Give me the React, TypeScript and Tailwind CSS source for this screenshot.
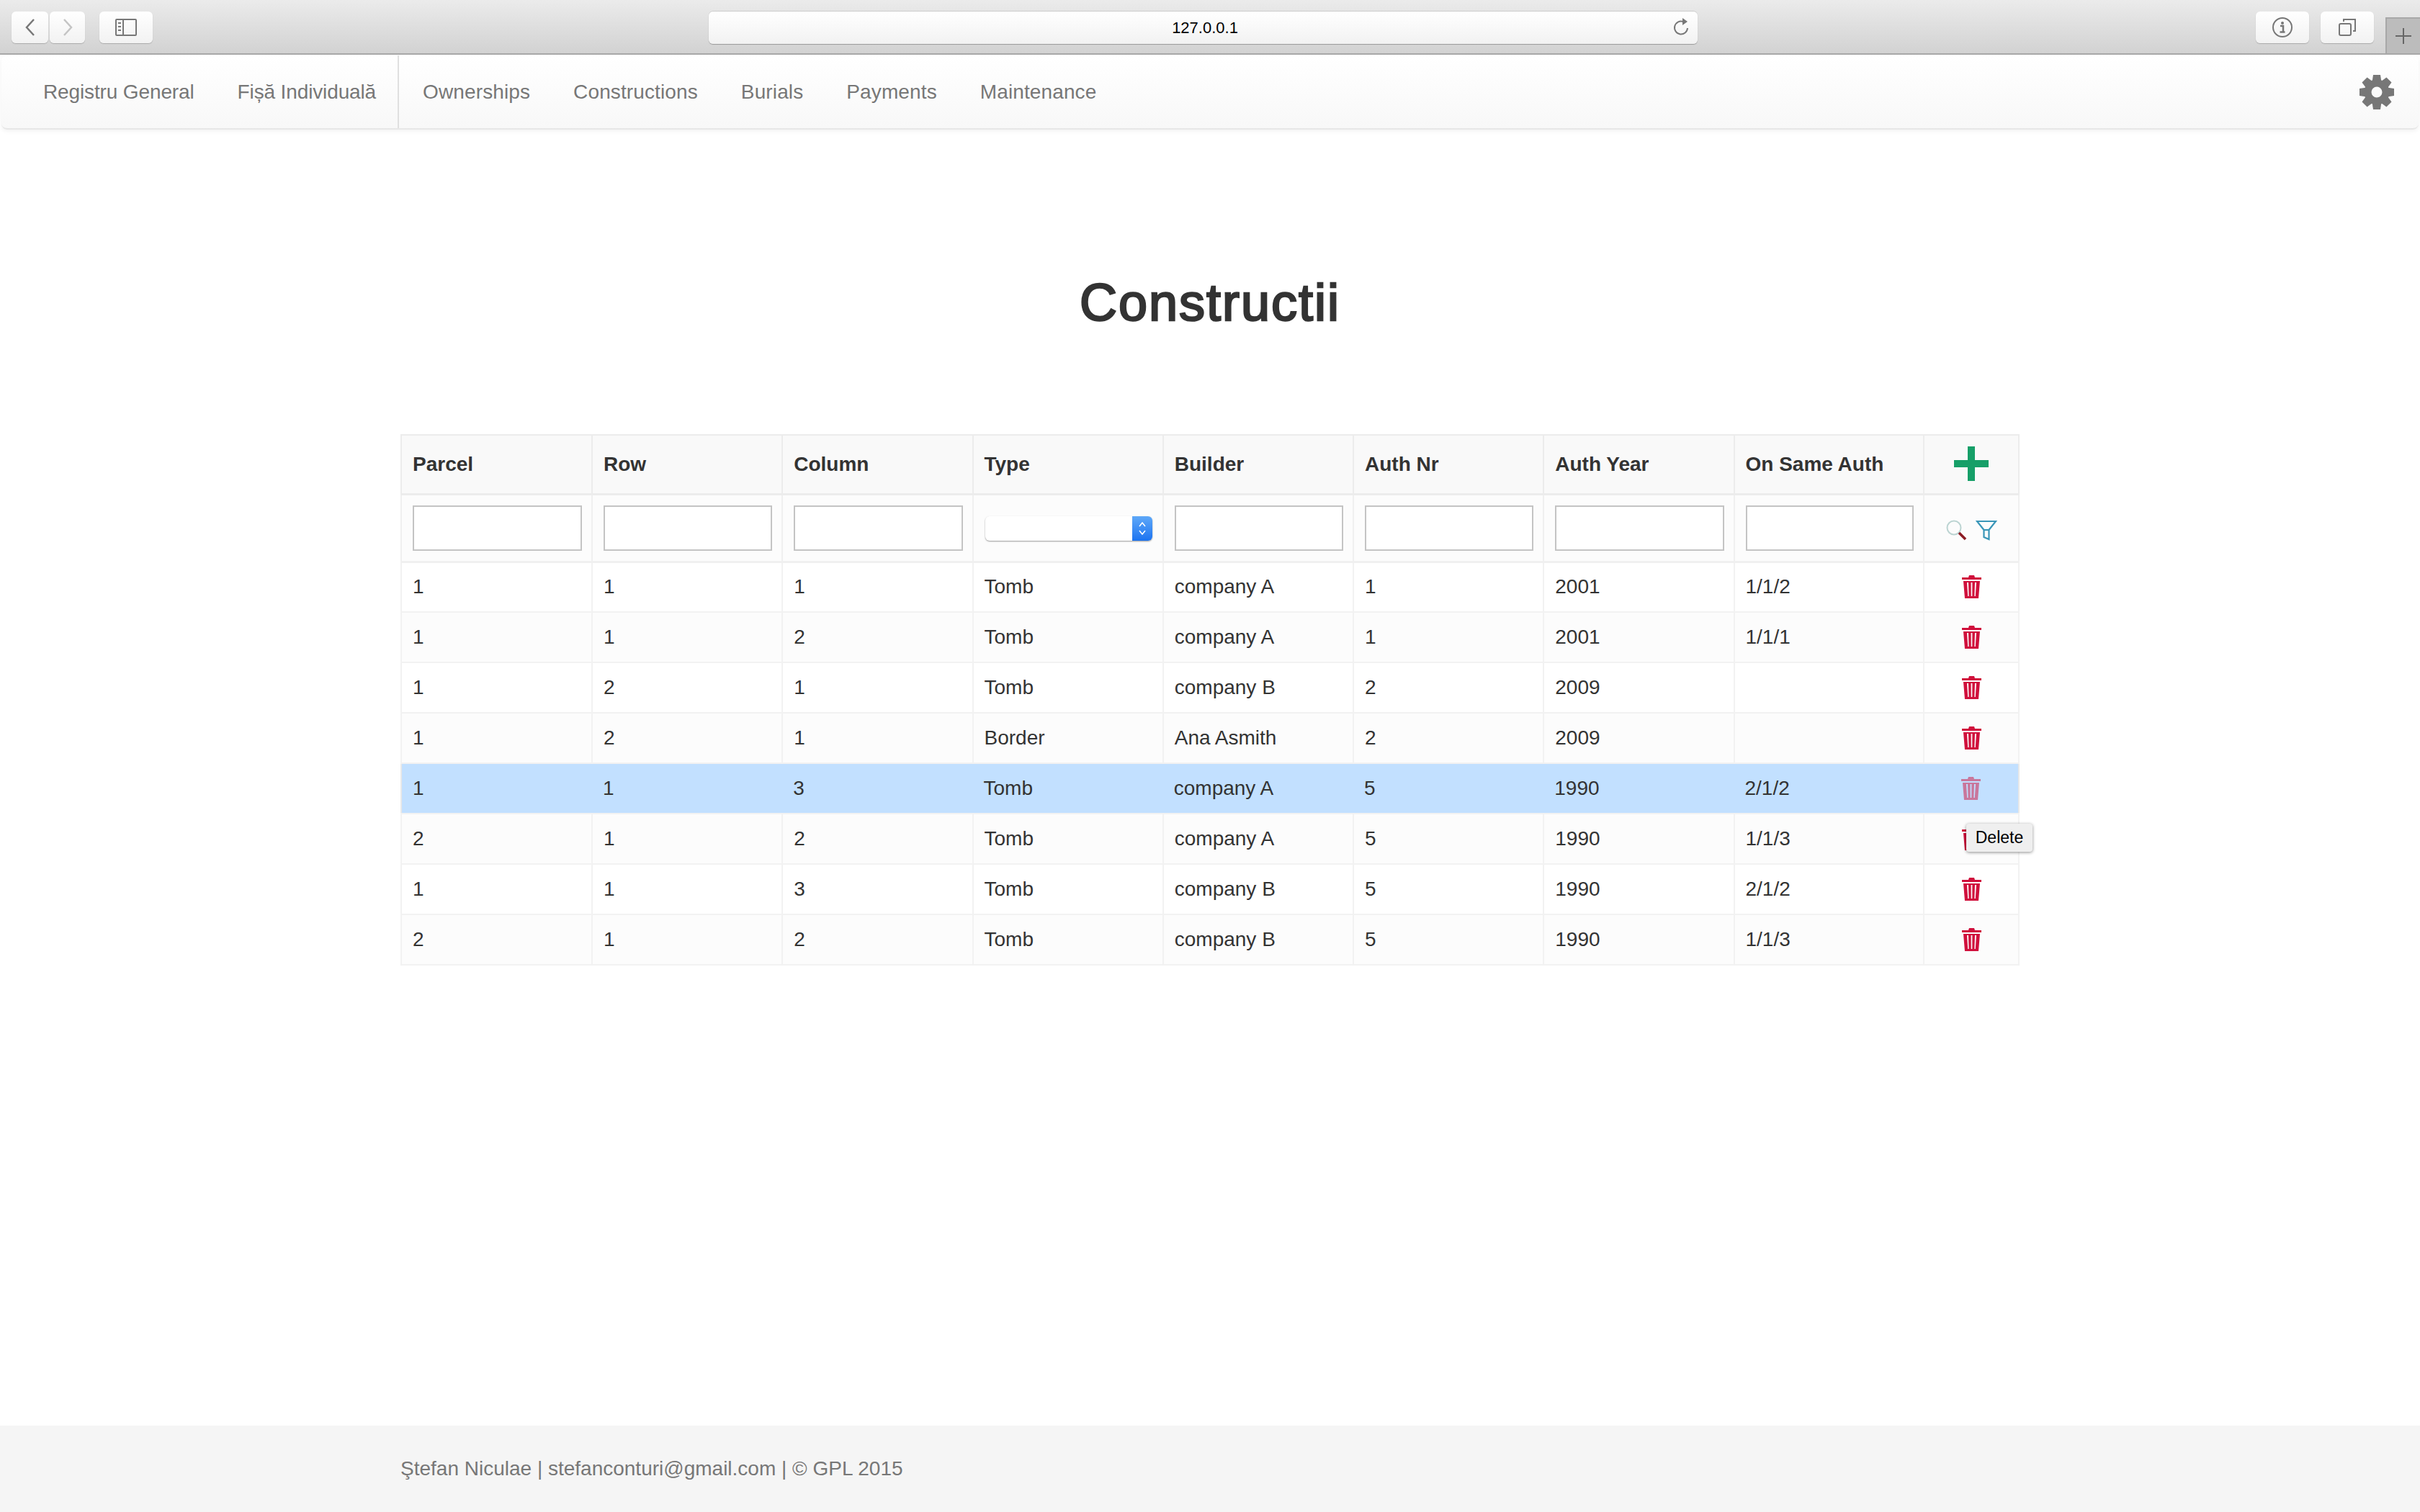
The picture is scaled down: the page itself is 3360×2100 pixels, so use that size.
const columns = ['Parcel', 'Row', 'Column', 'Type', 'Builder', 'Auth Nr', 'Auth Year', 'On Same Auth'];

const rows = [
  ['1', '1', '1', 'Tomb', 'company A', '1', '2001', '1/1/2'],
  ['1', '1', '2', 'Tomb', 'company A', '1', '2001', '1/1/1'],
  ['1', '2', '1', 'Tomb', 'company B', '2', '2009', ''],
  ['1', '2', '1', 'Border', 'Ana Asmith', '2', '2009', ''],
  ['1', '1', '3', 'Tomb', 'company A', '5', '1990', '2/1/2'],
  ['2', '1', '2', 'Tomb', 'company A', '5', '1990', '1/1/3'],
  ['1', '1', '3', 'Tomb', 'company B', '5', '1990', '2/1/2'],
  ['2', '1', '2', 'Tomb', 'company B', '5', '1990', '1/1/3'],
];

const navLeft = ['Registru General', 'Fișă Individuală'];
const navRight = ['Ownerships', 'Constructions', 'Burials', 'Payments', 'Maintenance'];

function TrashIcon({ faded }: { faded?: boolean }) {
  return (
    <svg viewBox="0 0 27 32" className={`mx-auto h-8 w-[27px] ${faded ? 'opacity-50' : ''}`} fill="#d0103c">
      <path d="M10 0h7l1 3h9v3H0V3h9z" />
      <path
        fillRule="evenodd"
        d="M2 8h23l-2 24H4zM7 10l1.2 19h1.4L9 10zM12.6 10l.1 19h1.6l.1-19zM18 10l-.6 19h1.4L20 10z"
      />
    </svg>
  );
}

function GearIcon() {
  const teeth = [0, 45, 90, 135, 180, 225, 270, 315];
  return (
    <svg viewBox="0 0 48 48" className="h-12 w-12" fill="#777">
      {teeth.map((deg) => (
        <path key={deg} d="M19 0h10l1.5 10h-13z" transform={`rotate(${deg} 24 24)`} />
      ))}
      <circle cx="24" cy="24" r="12.5" fill="none" stroke="#777" strokeWidth="10" />
    </svg>
  );
}

function ToolButton({ className, children }: { className: string; children: React.ReactNode }) {
  return (
    <div
      className={`flex h-11 items-center justify-center rounded-md bg-gradient-to-b from-white to-[#f2f2f2] shadow-[0_1px_1px_#aaa] ${className}`}
    >
      {children}
    </div>
  );
}

function BrowserBar() {
  return (
    <div className="relative flex h-[76px] items-start border-b-2 border-[#a8a8a8] bg-gradient-to-b from-[#ebebeb] to-[#d2d2d2] pt-4">
      <ToolButton className="ml-4 w-[51px]">
        <svg viewBox="0 0 16 28" className="h-7 w-4" fill="none" stroke="#777" strokeWidth="2.5">
          <path d="M13 3 3 14l10 11" />
        </svg>
      </ToolButton>
      <ToolButton className="ml-0.5 w-[49px]">
        <svg viewBox="0 0 16 28" className="h-7 w-4" fill="none" stroke="#c4c4c4" strokeWidth="2.5">
          <path d="M3 3l10 11L3 25" />
        </svg>
      </ToolButton>
      <ToolButton className="ml-5 w-[74px]">
        <svg viewBox="0 0 30 24" className="h-6 w-[30px]" fill="none" stroke="#777" strokeWidth="2">
          <rect x="1" y="1" width="28" height="22" rx="1" />
          <path d="M11 1v22" />
          <path d="M4 6h4M4 11h4M4 16h4" />
        </svg>
      </ToolButton>
      <div className="relative ml-[772px] flex h-[45px] w-[1373px] items-center justify-center rounded-md bg-gradient-to-b from-white to-[#f2f2f2] pl-[5px] font-['Liberation_Sans',sans-serif] text-[22px] text-black shadow-[0_1px_1px_#999,0_-1px_0_#ccc]">
        127.0.0.1
        <svg viewBox="0 0 24 28" className="absolute top-2 right-2.5 h-7 w-6" fill="none" stroke="#777" strokeWidth="2">
          <path d="M14 6A9 9 0 1 0 20 15" />
          <path d="M13 1l7 5-7 5z" fill="#777" stroke="none" />
        </svg>
      </div>
      <ToolButton className="ml-[775px] w-[74px]">
        <svg viewBox="0 0 28 28" className="h-7 w-7" fill="none" stroke="#777" strokeWidth="2">
          <circle cx="14" cy="14" r="13" />
          <circle cx="14" cy="8" r="2" fill="#777" stroke="none" />
          <path d="M11 12h4v8M10.5 20.5h7" strokeWidth="2.5" />
        </svg>
      </ToolButton>
      <ToolButton className="ml-4 w-[74px]">
        <svg viewBox="0 0 24 24" className="h-6 w-6" fill="none" stroke="#777" strokeWidth="2">
          <rect x="1" y="7" width="16" height="16" rx="2" />
          <path d="M7 4V1h16v16h-3" />
        </svg>
      </ToolButton>
      <div className="absolute right-0 bottom-0 flex h-[50px] w-12 items-center justify-center border-t-2 border-l-2 border-[#a8a8a8] bg-[#bcbcbc]">
        <svg viewBox="0 0 24 24" className="h-6 w-6" stroke="#666" strokeWidth="2">
          <path d="M12 1v22M1 12h22" />
        </svg>
      </div>
    </div>
  );
}

function NavBar() {
  return (
    <nav className="mx-0.5 mt-px flex h-[103px] items-center rounded-lg border-b-2 border-[#e7e7e7] bg-gradient-to-b from-white to-[#f8f8f8] pl-7 text-[#777] shadow-[0_2px_6px_rgba(0,0,0,0.06)]">
      <div className="flex h-full items-center border-r-2 border-[#e0e0e0] tracking-[-0.13px]">
        {navLeft.map((item) => (
          <a key={item} className="px-[30px]">
            {item}
          </a>
        ))}
      </div>
      <div className="ml-[3px] flex items-center tracking-[0.12px]">
        {navRight.map((item) => (
          <a key={item} className="px-[30px]">
            {item}
          </a>
        ))}
      </div>
      <div className="mr-[34px] ml-auto">
        <GearIcon />
      </div>
    </nav>
  );
}

function ConstructionsTable() {
  return (
    <table className="w-[2246px] table-fixed border-collapse border-2 border-[#e8e8e8]">
      <colgroup>
        {columns.map((col, i) => (
          <col key={col} className={i === 0 ? 'w-[265px]' : i === 7 ? 'w-[263.5px]' : 'w-[264.25px]'} />
        ))}
        <col className="w-[132px]" />
      </colgroup>
      <thead>
        <tr className="h-[82px] bg-[#f9f9f9]">
          {columns.map((col) => (
            <th key={col} className="border-2 border-b-[3px] border-[#ececec] px-[15px] text-left font-bold">
              {col}
            </th>
          ))}
          <th className="border-2 border-b-[3px] border-[#ececec] pb-0.5">
            <svg viewBox="0 0 48 48" className="mx-auto h-12 w-12" fill="#169f68">
              <path d="M19 0h10v19h19v10H29v19H19V29H0V19h19z" />
            </svg>
          </th>
        </tr>
      </thead>
      <tbody>
        <tr className="h-[94px] bg-[#fcfcfc]">
          {columns.map((col) =>
            col === 'Type' ? (
              <td key={col} className="border-2 border-b-[3px] border-[#f0f0f0] pr-[14px] pl-[16px]">
                <div className="mt-0.5 flex h-[34px] overflow-hidden rounded-md bg-white shadow-[0_1px_2px_#999]">
                  <div className="flex-1" />
                  <div className="flex w-7 items-center justify-center bg-gradient-to-b from-[#5ea8f8] to-[#1a73f0]">
                    <svg viewBox="0 0 12 24" className="h-6 w-3" fill="none" stroke="white" strokeWidth="1.5">
                      <path d="M2 9l4-5 4 5M2 15l4 5 4-5" />
                    </svg>
                  </div>
                </div>
              </td>
            ) : (
              <td key={col} className="border-2 border-b-[3px] border-[#f0f0f0] pr-[13px] pl-[15px]">
                <input className="block h-[63px] w-full border-2 border-[#c4c4c4] bg-white" />
              </td>
            ),
          )}
          <td className="border-2 border-b-[3px] border-[#f0f0f0]">
            <div className="flex items-center justify-center gap-3 pt-1.5">
              <svg viewBox="0 0 30 30" className="h-[30px] w-[30px]" fill="none">
                <circle cx="12" cy="12" r="9.5" stroke="#bcd4d2" strokeWidth="2" />
                <path d="M19 19l9 9" stroke="#8c1c24" strokeWidth="3.5" />
              </svg>
              <svg viewBox="0 0 30 30" className="h-[30px] w-[30px]" fill="none" stroke="#3a96b8" strokeWidth="2.2">
                <path d="M2 3h26L18.5 15v13l-7-3V15z" />
                <path d="M11.5 15h7" />
              </svg>
            </div>
          </td>
        </tr>
        {rows.map((row, i) => {
          const selected = i === 4;
          const bg = selected ? 'bg-[#c2e0ff]' : i % 2 === 0 ? 'bg-white' : 'bg-[#fcfcfc]';
          const cell = selected ? 'border-y-2 border-[#f2f2f2]' : 'border-2 border-[#f2f2f2]';
          return (
            <tr key={i} className={`h-[70px] ${bg}`}>
              {row.map((value, j) => (
                <td key={j} className={`${cell} px-[15px]`}>
                  {value}
                </td>
              ))}
              <td className={`${cell} relative`}>
                <TrashIcon faded={selected} />
                {i === 5 && (
                  <div className="absolute top-[13px] left-[58px] z-10 flex h-[39px] w-[92px] items-center justify-center rounded-sm bg-[#efefef] text-[23px] text-black shadow-[0_1px_4px_rgba(0,0,0,0.45)]">
                    Delete
                  </div>
                )}
              </td>
            </tr>
          );
        })}
      </tbody>
    </table>
  );
}

export default function App() {
  return (
    <div className="flex h-[2100px] flex-col overflow-hidden bg-white font-['Liberation_Sans',sans-serif] text-[28px] text-[#333]">
      <BrowserBar />
      <NavBar />
      <main className="mx-auto w-[2248px]">
        <h1 className="mt-[197px] mb-[140px] text-center text-[72px] leading-[86px] font-normal tracking-[2px] [-webkit-text-stroke:2.5px_#333]">
          Constructii
        </h1>
        <ConstructionsTable />
      </main>
      <footer className="mt-auto flex h-[120px] items-center justify-center bg-[#f5f5f5] text-[#777]">
        <p className="w-[2248px]">Ştefan Niculae | stefanconturi@gmail.com | © GPL 2015</p>
      </footer>
    </div>
  );
}
